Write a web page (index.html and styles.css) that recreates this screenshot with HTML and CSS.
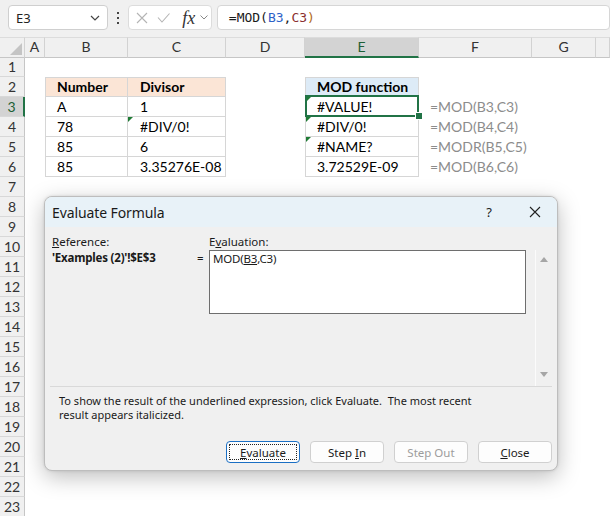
FILE: index.html
```html
<!DOCTYPE html>
<html lang="en">
<head>
<meta charset="utf-8">
<title>Evaluate Formula</title>
<link rel="stylesheet" href="styles.css">
</head>
<body>
<div class="app">
  <div class="fbar">
    <div class="namebox"><span class="nb-text">E3</span><svg class="chev" width="10" height="6" viewBox="0 0 10 6"><path d="M1 1l4 4 4-4" fill="none" stroke="#444" stroke-width="1.2"/></svg></div>
    <div class="dots"><i></i><i></i><i></i></div>
    <div class="fxbox">
      <svg width="12" height="12" viewBox="0 0 12 12"><path d="M1 1L11 11M11 1L1 11" fill="none" stroke="#b4b4b4" stroke-width="1.1"/></svg>
      <svg width="13" height="10" viewBox="0 0 13 10"><path d="M1 4.5l4 4.5 7.5-8.5" fill="none" stroke="#b4b4b4" stroke-width="1.1"/></svg>
      <span class="fx">fx</span>
      <svg width="8" height="5" viewBox="0 0 8 5"><path d="M0.5 0.5l3.5 3.5 3.5-3.5" fill="none" stroke="#888" stroke-width="1"/></svg>
    </div>
    <div class="formula"><span>=MOD(</span><span class="r1">B3</span><span>,</span><span class="r2">C3</span><span class="pr">)</span></div>
  </div>

  <div class="sheet">
    <div class="row hdr">
      <div class="corner"><span class="tri"></span></div>
      <div class="ch">A</div><div class="ch">B</div><div class="ch">C</div><div class="ch">D</div>
      <div class="ch sel">E</div><div class="ch">F</div><div class="ch">G</div><div class="ch"></div>
    </div>
    <div class="row"><div class="rh">1</div></div>
    <div class="row">
      <div class="rh">2</div><div></div>
      <div class="c t tl tt head-o">Number</div><div class="c t tt head-o">Divisor</div><div></div>
      <div class="c t tl tt head-b">MOD function</div><div></div>
    </div>
    <div class="row">
      <div class="rh sel">3</div><div></div>
      <div class="c t tl">A</div><div class="c t">1</div><div></div>
      <div class="c t tl err active">#VALUE!</div><div class="c f">=MOD(B3,C3)</div>
    </div>
    <div class="row">
      <div class="rh">4</div><div></div>
      <div class="c t tl">78</div><div class="c t err">#DIV/0!</div><div></div>
      <div class="c t tl err">#DIV/0!</div><div class="c f">=MOD(B4,C4)</div>
    </div>
    <div class="row">
      <div class="rh">5</div><div></div>
      <div class="c t tl">85</div><div class="c t">6</div><div></div>
      <div class="c t tl err">#NAME?</div><div class="c f">=MODR(B5,C5)</div>
    </div>
    <div class="row">
      <div class="rh">6</div><div></div>
      <div class="c t tl">85</div><div class="c t">3.35276E-08</div><div></div>
      <div class="c t tl">3.72529E-09</div><div class="c f">=MOD(B6,C6)</div>
    </div>
    <div class="row"><div class="rh">7</div></div>
    <div class="row"><div class="rh">8</div></div>
    <div class="row"><div class="rh">9</div></div>
    <div class="row"><div class="rh">10</div></div>
    <div class="row"><div class="rh">11</div></div>
    <div class="row"><div class="rh">12</div></div>
    <div class="row"><div class="rh">13</div></div>
    <div class="row"><div class="rh">14</div></div>
    <div class="row"><div class="rh">15</div></div>
    <div class="row"><div class="rh">16</div></div>
    <div class="row"><div class="rh">17</div></div>
    <div class="row"><div class="rh">18</div></div>
    <div class="row"><div class="rh">19</div></div>
    <div class="row"><div class="rh">20</div></div>
    <div class="row"><div class="rh">21</div></div>
    <div class="row"><div class="rh">22</div></div>
    <div class="row"><div class="rh">23</div></div>
  </div>

  <div class="dialog">
    <div class="titlebar">
      <span class="title">Evaluate Formula</span>
      <span class="help">?</span>
      <svg class="xclose" width="12" height="12" viewBox="0 0 12 12"><path d="M1 1L11 11M11 1L1 11" fill="none" stroke="#222" stroke-width="1.1"/></svg>
    </div>
    <div class="dbody">
      <div class="top">
        <div class="refcol">
          <div class="lbl"><u>R</u>eference:</div>
          <div class="refval">'Examples (2)'!$E$3</div>
        </div>
        <div class="eq">=</div>
        <div class="evalcol">
          <div class="lbl">E<u>v</u>aluation:</div>
          <div class="evalbox">MOD(<u>B3</u>,C3)</div>
        </div>
        <div class="vscroll">
          <span class="arr up"></span>
          <span class="arr down"></span>
        </div>
      </div>
      <div class="sep"></div>
      <p class="hint">To show the result of the underlined expression, click Evaluate.&nbsp; The most recent<br>result appears italicized.</p>
      <div class="btns">
        <button class="btn focus"><span class="fr"><span><u>E</u>valuate</span></span></button>
        <button class="btn"><span>Step <u>I</u>n</span></button>
        <button class="btn dis"><span>Step Out</span></button>
        <button class="btn"><span><u>C</u>lose</span></button>
      </div>
    </div>
  </div>
</div>
</body>
</html>
```

FILE: styles.css
```css
* { box-sizing: border-box; }
html, body { margin: 0; padding: 0; }
body {
  width: 610px;
  height: 516px;
  overflow: hidden;
  background: #fff;
  font-family: "Lato", "Liberation Sans", sans-serif;
}
.app { position: relative; width: 610px; height: 516px; overflow: hidden; }

/* formula bar */
.fbar {
  height: 37px;
  background: #f0f0f0;
  display: flex;
  align-items: flex-start;
  padding-top: 5px;
  padding-left: 8px;
}
.namebox {
  width: 102px; height: 25px;
  background: #fff;
  border: 1px solid #cfcfcf;
  border-radius: 4px;
  display: flex; align-items: center; justify-content: space-between;
  padding: 0 7px 0 7px;
  font-family: "Noto Sans", sans-serif;
  font-size: 13px;
  color: #222;
}
.dots {
  width: 20px; height: 25px;
  display: flex; flex-direction: column; align-items: center; justify-content: center;
  gap: 3px;
}
.dots i { display: block; width: 2px; height: 2px; background: #444; }
.fxbox {
  width: 85px; height: 25px;
  background: #fff;
  border: 1px solid #dcdcdc;
  border-radius: 4px;
  display: flex; align-items: center;
  padding-left: 7px;
  gap: 0;
}
.fxbox svg:nth-child(1) { margin-right: 9px; }
.fxbox svg:nth-child(2) { margin-right: 12px; }
.fx {
  font-family: "Liberation Serif", serif;
  font-style: italic;
  font-size: 18px;
  color: #333;
  margin-right: 5px;
  line-height: 1;
}
.formula {
  margin-left: 5px;
  width: 400px; height: 25px;
  background: #fff;
  border: 1px solid #d6d6d6;
  border-radius: 4px;
  padding-left: 11px;
  font-family: "DejaVu Sans Mono", monospace;
  font-size: 13px;
  line-height: 23px;
  color: #1a1a1a;
}
.formula .r1 { color: #2f62c8; }
.formula .r2 { color: #8a2f2f; }
.formula .pr { color: #b06a1a; }

/* sheet */
.sheet { display: flex; flex-direction: column; }
.row {
  display: grid;
  grid-template-columns: 25px 20px 83px 98px 79px 114px 113px 64px 14px;
  height: 20px;
}
.hdr .ch, .corner {
  background: #f0f0f0;
  border-right: 1px solid #d2d2d2;
  border-bottom: 1px solid #c6c6c6;
  border-top: 1px solid #dcdcdc;
  text-align: center;
  font-size: 14px;
  line-height: 18px;
  color: #333;
}
.corner { position: relative; }
.corner .tri {
  position: absolute; right: 2px; bottom: 2px;
  width: 0; height: 0;
  border-left: 12px solid transparent;
  border-bottom: 12px solid #c4c4c4;
}
.hdr .ch.sel {
  background: #d3d3d3;
  border-bottom: 2px solid #217346;
  color: #1d5f36;
}
.rh {
  background: #f0f0f0;
  border-right: 1px solid #c6c6c6;
  border-bottom: 1px solid #d8d8d8;
  text-align: center;
  font-size: 14px;
  line-height: 19px;
  color: #333;
}
.rh.sel {
  background: #d3d3d3;
  border-right: 2px solid #217346;
  color: #1d5f36;
}
.c {
  font-size: 14px;
  line-height: 19px;
  padding-left: 12px;
  color: #000;
  white-space: nowrap;
  position: relative;
}
.t { border-right: 1px solid #d6d6d6; border-bottom: 1px solid #d6d6d6; }
.tl { border-left: 1px solid #d6d6d6; padding-left: 11px; }
.tt { border-top: 1px solid #d6d6d6; line-height: 18px; }
.head-o { background: #fbe5d6; font-weight: bold; }
.head-b { background: #ddebf7; font-weight: bold; }
.f { color: #8c8c8c; padding-left: 11px; position: relative; }
.err::before {
  content: "";
  position: absolute; left: 0; top: 0;
  width: 0; height: 0;
  border-top: 5px solid #1e7b34;
  border-right: 5px solid transparent;
}
.active::after {
  content: "";
  position: absolute;
  left: -1px; top: -2px; right: -1px; bottom: -1px;
  border: 2px solid #217346;
}
.row .active + .f::before {
  content: "";
  position: absolute;
  left: -4px; bottom: -3px;
  width: 6px; height: 6px;
  background: #217346;
  border: 1px solid #fff;
  z-index: 2;
}

/* dialog */
.dialog {
  position: absolute;
  left: 44px; top: 196px;
  width: 514px; height: 275px;
  background: #f0f0f0;
  border: 1px solid #bdbdbd;
  border-radius: 8px;
  overflow: hidden;
  box-shadow: 0 6px 22px rgba(0,0,0,0.26), 0 0 3px rgba(0,0,0,0.12);
  font-family: "Noto Sans", sans-serif;
  color: #1a1a1a;
}
.titlebar {
  height: 30px;
  background: #e8f2f8;
  display: flex;
  align-items: center;
  padding-left: 7px;
}
.title {
  font-size: 14px;
  color: #1a1a1a;
  flex: 1;
  letter-spacing: -0.1px;
}
.help { font-size: 13px; margin-right: 37px; color: #222; }
.xclose { margin-right: 16px; }
.dbody { padding: 7px 5px 0 7px; font-size: 11.5px; }
.top { display: flex; height: 152px; }
.lbl { height: 16px; line-height: 16px; }
.refcol { width: 143px; }
.refval { font-weight: bold; line-height: 16px; height: 16px; letter-spacing: -0.2px; }
.eq { width: 14px; padding-top: 16px; line-height: 16px; padding-left: 2px; }
.evalcol { width: 317px; }
.evalbox {
  height: 64px;
  background: #fff;
  border: 1px solid #6e6e6e;
  padding: 1px 3px;
  line-height: 14px;
  letter-spacing: -0.2px;
}
.vscroll {
  margin-left: 9px;
  margin-top: 16px;
  width: 17px;
  height: 136px;
  border-left: 1px solid #fbfbfb;
  position: relative;
}
.arr {
  position: absolute;
  left: 4px;
  width: 0; height: 0;
  border-left: 4px solid transparent;
  border-right: 4px solid transparent;
}
.arr.up { top: 7px; border-bottom: 5px solid #a6a6a6; }
.arr.down { bottom: 9px; border-top: 5px solid #a6a6a6; }
.sep { height: 1px; background: #d9d9d9; margin: 0 0 0 -2px; width: 502px; }
.hint {
  margin: 7px 0 0 7px;
  font-size: 11px;
  line-height: 14px;
  color: #1a1a1a;
}
.btns {
  display: flex;
  justify-content: flex-end;
  gap: 10px;
  margin-top: 19px;
}
.btn {
  width: 74px; height: 22px;
  background: #fdfdfd;
  border: 1px solid #d0d0d0;
  border-radius: 4px;
  font-family: "Noto Sans", sans-serif;
  font-size: 11.5px;
  color: #1a1a1a;
  padding: 0;
  display: flex; align-items: center; justify-content: center;
}
.btn.focus { border-color: #1a6fc4; padding: 2px; }
.btn .fr {
  flex: 1; align-self: stretch;
  display: flex; align-items: center; justify-content: center;
  border: 1px dotted #222;
  border-radius: 1px;
}
.btn.dis { color: #9c9c9c; }
```
